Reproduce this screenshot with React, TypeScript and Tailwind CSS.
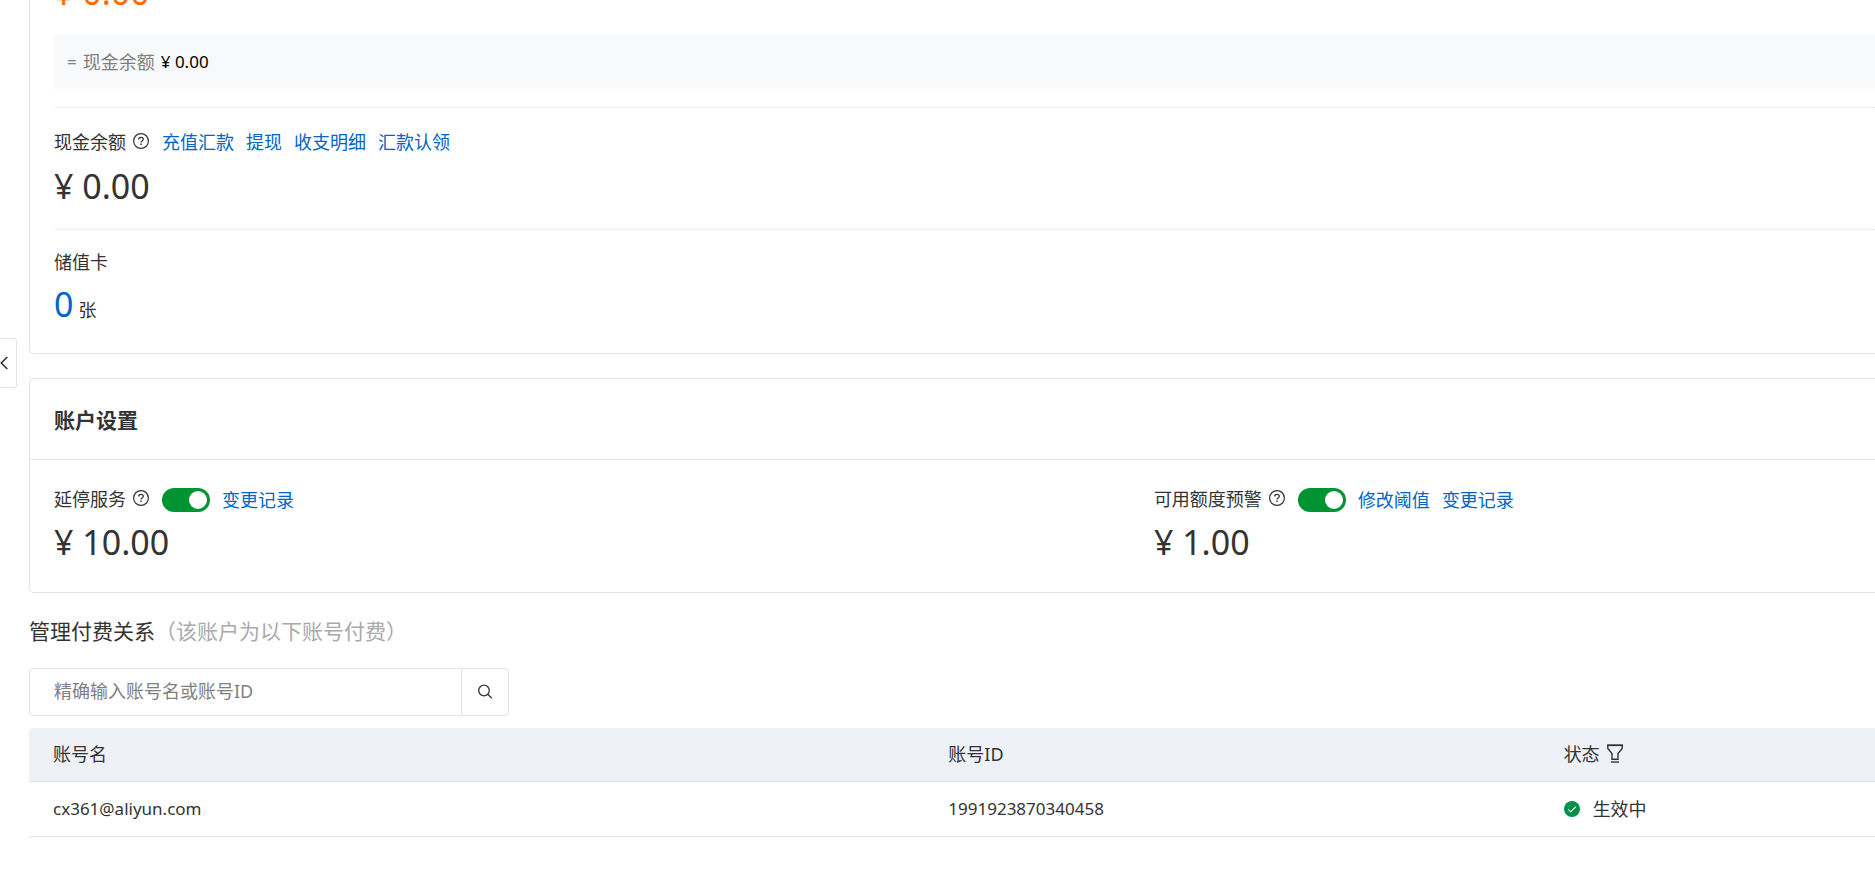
import { useState } from 'react';
import type { ReactNode } from 'react';

const accounts = [
  { name: 'cx361@aliyun.com', id: '1991923870340458', status: '生效中' },
];

function HelpIcon() {
  return (
    <svg viewBox="0 0 16 16" className="mb-0.5 size-4 shrink-0" fill="none" stroke="#333" aria-hidden="true">
      <circle cx="8" cy="8" r="7.4" strokeWidth="1.2" />
      <path d="M5.7 6.5C5.7 5.100 6.700 4.300 8 4.300s2.300.8 2.300 2c0 1.600-2.300 1.700-2.300 3.300" strokeWidth="1.3" />
      <path d="M8 10.600v1.400" strokeWidth="1.4" />
    </svg>
  );
}

function SearchIcon() {
  return (
    <svg viewBox="0 0 16 16" className="size-4" fill="none" stroke="#333" strokeWidth="1.3" aria-hidden="true">
      <circle cx="7" cy="6.500" r="5.300" />
      <path d="m10.800 10.300 4 4" />
    </svg>
  );
}

function FilterIcon() {
  return (
    <svg viewBox="0 0 16 19" className="h-[19px] w-4" fill="none" stroke="#333" strokeWidth="1.4" aria-hidden="true">
      <path d="M.8 1v3.500l4.200 5V15.300h6V9.500l4.200-5V1" />
      <path d="M.1 1.200h15.800" strokeWidth="1.8" />
      <path d="M4 18h8" />
    </svg>
  );
}

function CheckIcon() {
  return (
    <svg viewBox="0 0 16 16" className="size-4 shrink-0" fill="none" aria-hidden="true">
      <circle cx="8" cy="8" r="8" fill="#00924c" />
      <path d="m4.200 8.300 2.500 2.500 5.200-5.200" stroke="#fff" strokeWidth="1.1" />
    </svg>
  );
}

function TextLink({ children }: { children: ReactNode }) {
  return (
    <a href="#" className="text-[#0064c8] hover:underline">
      {children}
    </a>
  );
}

function Label({ children }: { children: ReactNode }) {
  return (
    <span className="mr-px flex items-center gap-[7px]">
      {children}
      <HelpIcon />
    </span>
  );
}

function Amount({ children }: { children: ReactNode }) {
  return <p className="h-12 text-[34px] leading-12">{children}</p>;
}

interface SettingProps {
  label: string;
  amount: string;
  links: string[];
}

function Setting({ label, amount, links }: SettingProps) {
  const [enabled, setEnabled] = useState(true);

  return (
    <div>
      <div className="mb-0.5 flex h-8 items-center gap-3">
        <div className="pb-0.5">
          <Label>{label}</Label>
        </div>
        <input
          type="checkbox"
          role="switch"
          aria-label={label}
          checked={enabled}
          onChange={(e) => setEnabled(e.target.checked)}
          className="h-6 w-12 appearance-none rounded-full bg-gray-300 p-[3px] before:block before:size-[18px] before:rounded-full before:bg-white checked:bg-[#009431] checked:before:ml-6"
        />
        {links.map((link) => (
          <TextLink key={link}>{link}</TextLink>
        ))}
      </div>
      <Amount>{amount}</Amount>
    </div>
  );
}

export default function App() {
  return (
    <div className="relative overflow-hidden bg-white pl-[29px] font-['Noto_Sans','Noto_Sans_CJK_SC',sans-serif] text-[18px] leading-7 text-[#333]">
      <button
        type="button"
        aria-label="收起"
        className="absolute top-[338px] left-0 flex h-[50px] w-[17px] items-center rounded-r-[3px] border border-l-0 border-[#e3e4e6] bg-white"
      >
        <svg viewBox="0 0 8 14" className="h-3.5 w-2" fill="none" stroke="#333" strokeWidth="1.6" aria-hidden="true">
          <path d="m7.300 1-6 6 6 6" />
        </svg>
      </button>

      <section className="rounded-bl-[5px] border-b border-l border-[#e3e4e6] pb-[25px] pl-6">
        <div className="-mt-8 text-[#ff6a00]">
          <Amount>¥ 0.00</Amount>
        </div>
        <p className="mt-[19px] flex h-[54px] items-center gap-1.5 bg-[#f7f9fb] px-[13px] text-[#808080]">
          <span className="text-[17px]">=</span>
          <span>现金余额</span>
          <span className="text-[17px] text-black">¥ 0.00</span>
        </p>

        <div className="mt-[18px] border-t border-dotted border-[#e3e4e6] pt-5 pb-[19px]">
          <div className="mb-1.5 flex h-7 items-center gap-3">
            <Label>现金余额</Label>
            <TextLink>充值汇款</TextLink>
            <TextLink>提现</TextLink>
            <TextLink>收支明细</TextLink>
            <TextLink>汇款认领</TextLink>
          </div>
          <Amount>¥ 0.00</Amount>
        </div>

        <div className="border-t border-dotted border-[#e3e4e6] pt-[18px]">
          <p className="mb-1 h-7">储值卡</p>
          <div className="flex h-12 items-baseline gap-[5px]">
            <a href="#" className="text-[34px] leading-12 text-[#0064c8]">
              0
            </a>
            <span>张</span>
          </div>
        </div>
      </section>

      <section className="mt-6 rounded-l-[5px] border-y border-l border-[#e3e4e6]">
        <h2 className="flex h-[81px] items-center border-b border-[#e3e4e6] pt-0.5 pl-6 text-[21px] font-bold">账户设置</h2>
        <div className="grid grid-cols-[60.4%_1fr] pt-6 pb-[26px] pl-6">
          <Setting label="延停服务" amount="¥ 10.00" links={['变更记录']} />
          <Setting label="可用额度预警" amount="¥ 1.00" links={['修改阈值', '变更记录']} />
        </div>
      </section>

      <section className="mt-[22px]">
        <h2 className="h-8 text-[21px] leading-8">
          管理付费关系<span className="text-[#aaa]">（该账户为以下账号付费）</span>
        </h2>

        <form className="mt-[21px] flex h-12 w-[480px] rounded-[3px] border border-[#e3e4e6]" onSubmit={(e) => e.preventDefault()}>
          <input
            type="text"
            aria-label="账号名或账号ID"
            placeholder="精确输入账号名或账号ID"
            className="min-w-0 flex-1 px-6 pb-0.5 outline-none placeholder:text-[#808080]"
          />
          <button type="submit" aria-label="搜索" className="flex w-[47px] items-center justify-center border-l border-[#e3e4e6]">
            <SearchIcon />
          </button>
        </form>

        <table className="mt-3 w-full table-fixed border-separate border-spacing-0 text-left">
          <thead>
            <tr className="h-[54px]">
              <th className="w-[48.5%] rounded-tl-[3px] border-b border-[#e3e4e6] bg-[#eef1f7] px-6 pb-0.5 font-normal">账号名</th>
              <th className="w-1/3 border-b border-[#e3e4e6] bg-[#eef1f7] px-6 pb-0.5 font-normal">账号ID</th>
              <th className="border-b border-[#e3e4e6] bg-[#eef1f7] px-6 pb-0.5 font-normal">
                <span className="flex items-center gap-[7px]">
                  状态
                  <button type="button" aria-label="筛选状态">
                    <FilterIcon />
                  </button>
                </span>
              </th>
            </tr>
          </thead>
          <tbody>
            {accounts.map((account) => (
              <tr key={account.id} className="h-[55px]">
                <td className="border-b border-[#e3e4e6] px-6 text-[17px]">{account.name}</td>
                <td className="border-b border-[#e3e4e6] px-6 text-[17px]">{account.id}</td>
                <td className="border-b border-[#e3e4e6] px-6">
                  <span className="flex items-center gap-[13px]">
                    <CheckIcon />
                    {account.status}
                  </span>
                </td>
              </tr>
            ))}
          </tbody>
        </table>
      </section>
    </div>
  );
}
